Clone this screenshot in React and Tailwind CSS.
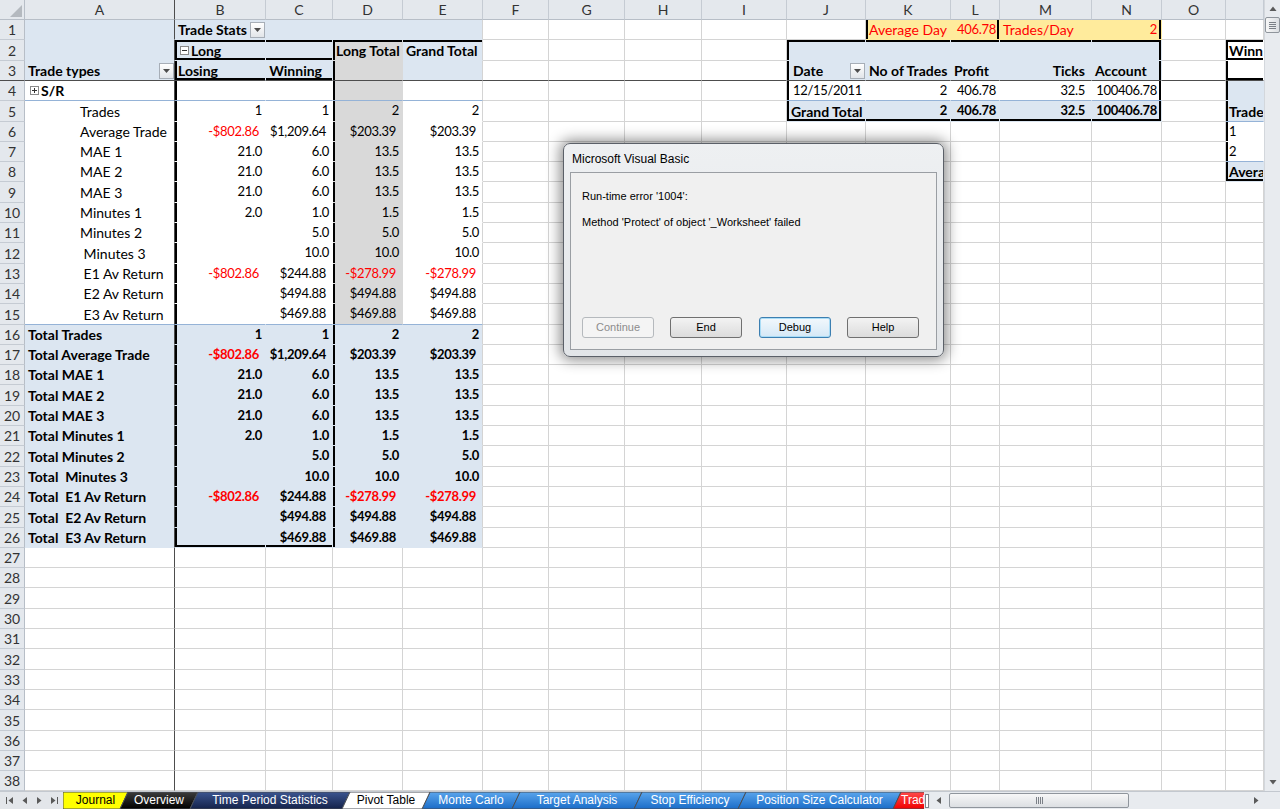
import React from 'react';

// --- GRID GEOMETRY ---
const W = ['w-[25px]', 'w-[150px]', 'w-[91px]', 'w-[67px]', 'w-[70px]', 'w-[80px]', 'w-[66px]', 'w-[76px]', 'w-[77px]', 'w-[85px]', 'w-[79px]', 'w-[85px]', 'w-[49px]', 'w-[92px]', 'w-[70px]', 'w-[64px]', 'w-[38px]'];
const LETTERS = ['', 'A', 'B', 'C', 'D', 'E', 'F', 'G', 'H', 'I', 'J', 'K', 'L', 'M', 'N', 'O', ''];
const COLS = Array.from({ length: 16 }, (_, i) => i + 1);
const ROWS = Array.from({ length: 38 }, (_, i) => i + 1);
const rowTop = (n) => Math.round(20 + (n - 1) * 20.3);
const rowH = (n) => (rowTop(n + 1) - rowTop(n) === 21 ? 'h-[21px]' : 'h-[20px]');

// thick range borders, drawn inside the cell
const TH = {
    l: 'shadow-[inset_2px_0_0_#000]',
    r: 'shadow-[inset_-2px_0_0_#000]',
    t: 'shadow-[inset_0_2px_0_#000]',
    b: 'shadow-[inset_0_-2px_0_#000]',
    lt: 'shadow-[inset_2px_0_0_#000,inset_0_2px_0_#000]',
    lb: 'shadow-[inset_2px_0_0_#000,inset_0_-2px_0_#000]',
    rt: 'shadow-[inset_-2px_0_0_#000,inset_0_2px_0_#000]',
    rb: 'shadow-[inset_-2px_0_0_#000,inset_0_-2px_0_#000]',
    tb: 'shadow-[inset_0_2px_0_#000,inset_0_-2px_0_#000]',
    ltb: 'shadow-[inset_2px_0_0_#000,inset_0_2px_0_#000,inset_0_-2px_0_#000]',
};

const BLUE = 'bg-[#dce6f1]';
const GRAY = 'bg-[#d9d9d9]';
const WHITE = 'bg-white';
const YEL = 'bg-[#ffeb9c]';
const LINE = 'border-b-[#95b3d7]';

// --- CELL DATA ---
const cells = {};
const put = (r, c, o) => { const k = r + '-' + c; cells[k] = { ...cells[k], ...o }; };

// pivot table A1:E26
for (let r = 1; r <= 26; r++) for (let c = 1; c <= 5; c++) {
    let bg = r <= 3 || r >= 16 ? BLUE : WHITE;
    if (c === 4 && r >= 2 && r <= 15) bg = GRAY;
    put(r, c, { bg, g: false, bb: r === 4 || r === 15 ? LINE : undefined, br: c === 5 ? 'border-r-[#d4d4d4]' : undefined });
}
put(2, 2, { th: 'ltb' }); put(2, 3, { th: 'tb' }); put(2, 4, { th: 'lt' }); put(2, 5, { th: 't' });
put(3, 2, { th: 'lb' }); put(3, 3, { th: 'b' });
for (let r = 3; r <= 26; r++) put(r, 4, { th: 'l' });
for (let r = 4; r <= 25; r++) put(r, 2, { th: 'l' });
put(26, 2, { th: 'lb' }); put(26, 3, { th: 'b' });

put(1, 2, { t: 'Trade Stats', b: true, dd: true, p: 'pl-[3px]' });
put(2, 2, { t: 'Long', b: true, icon: 'minus', p: 'pl-[5px]' });
put(2, 4, { t: 'Long Total', b: true, p: 'pl-[3px]' });
put(2, 5, { t: 'Grand Total', b: true, p: 'pl-[3px]' });
put(3, 1, { t: 'Trade types', b: true, dd: true, p: 'pl-[3px]' });
put(3, 2, { t: 'Losing', b: true, p: 'pl-[3px]' });
put(3, 3, { t: 'Winning', b: true, a: 'r', p: 'pr-[10px]' });
put(4, 1, { t: 'S/R', b: true, icon: 'plus', p: 'pl-[5px]' });

const STATS = [
    ['Trades', 'Total Trades', ['1', '1', '2', '2']],
    ['Average Trade', 'Total Average Trade', ['-$802.86', '$1,209.64', '$203.39', '$203.39']],
    ['MAE 1', 'Total MAE 1', ['21.0', '6.0', '13.5', '13.5']],
    ['MAE 2', 'Total MAE 2', ['21.0', '6.0', '13.5', '13.5']],
    ['MAE 3', 'Total MAE 3', ['21.0', '6.0', '13.5', '13.5']],
    ['Minutes 1', 'Total Minutes 1', ['2.0', '1.0', '1.5', '1.5']],
    ['Minutes 2', 'Total Minutes 2', ['', '5.0', '5.0', '5.0']],
    [' Minutes 3', 'Total  Minutes 3', ['', '10.0', '10.0', '10.0']],
    [' E1 Av Return', 'Total  E1 Av Return', ['-$802.86', '$244.88', '-$278.99', '-$278.99']],
    [' E2 Av Return', 'Total  E2 Av Return', ['', '$494.88', '$494.88', '$494.88']],
    [' E3 Av Return', 'Total  E3 Av Return', ['', '$469.88', '$469.88', '$469.88']],
];
STATS.forEach(([label, total, vals], i) => {
    put(5 + i, 1, { t: label, p: 'pl-[55px]' });
    put(16 + i, 1, { t: total, b: true, p: 'pl-[3px]' });
    vals.forEach((v, j) => {
        const o = { t: v, a: 'r', red: v.startsWith('-'), p: v.includes('$') ? 'pr-[6px]' : 'pr-[3px]' };
        put(5 + i, 2 + j, o);
        put(16 + i, 2 + j, { ...o, b: true });
    });
});

// daily summary K1:N5
put(1, 11, { t: 'Average Day', bg: YEL, g: false, red: true, p: 'pl-[3px]', th: 'l' });
put(1, 12, { t: '406.78', bg: YEL, g: false, red: true, a: 'r', p: 'pr-[3px]', th: 'r' });
put(1, 13, { t: 'Trades/Day', bg: YEL, g: false, red: true, p: 'pl-[3px]' });
put(1, 14, { t: '2', bg: YEL, g: false, red: true, a: 'r', p: 'pr-[4px]', th: 'r' });
for (let r = 2; r <= 5; r++) for (let c = 10; c <= 14; c++) {
    put(r, c, { bg: r === 4 ? WHITE : BLUE, g: false, bb: r === 4 ? LINE : undefined });
}
put(2, 10, { th: 'lt' }); put(3, 10, { th: 'l' }); put(4, 10, { th: 'l' }); put(5, 10, { th: 'lb' });
put(2, 14, { th: 'rt' }); put(3, 14, { th: 'r' }); put(4, 14, { th: 'r' }); put(5, 14, { th: 'rb' });
for (let c = 11; c <= 13; c++) { put(2, c, { th: 't' }); put(5, c, { th: 'b' }); }

put(3, 10, { t: 'Date', b: true, dd: true, p: 'pl-[6px]' });
put(3, 11, { t: 'No of Trades', b: true, p: 'pl-[3px]' });
put(3, 12, { t: 'Profit', b: true, p: 'pl-[3px]' });
put(3, 13, { t: 'Ticks', b: true, a: 'r', p: 'pr-[6px]' });
put(3, 14, { t: 'Account', b: true, p: 'pl-[3px]' });
[['12/15/2011', '2', '406.78', '32.5', '100406.78'], ['Grand Total', '2', '406.78', '32.5', '100406.78']].forEach((row, i) => {
    const r = 4 + i;
    put(r, 10, i ? { t: row[0], b: true, p: 'pl-[4px]' } : { t: row[0], a: 'r', p: 'pr-[3px]' });
    put(r, 11, { t: row[1], b: !!i, a: 'r', p: 'pr-[3px]' });
    put(r, 12, { t: row[2], b: !!i, a: 'r', p: 'pr-[3px]' });
    put(r, 13, { t: row[3], b: !!i, a: 'r', p: 'pr-[6px]' });
    put(r, 14, { t: row[4], b: !!i, a: 'r', p: 'pr-[4px]' });
});

// partly visible table in column P
[[2, WHITE, 'ltb', 'Winning', true], [3, WHITE, 'lb', '', false], [4, BLUE, 'l', '', false], [5, BLUE, 'l', 'Trade #', true],
 [6, WHITE, 'l', '1', false], [7, WHITE, 'l', '2', false], [8, BLUE, 'lb', 'Average', true]].forEach(([r, bg, th, t, b]) => {
    put(r, 16, { bg, th, t, b, g: false, p: 'pl-[3px]', bb: r === 5 || r === 7 ? LINE : undefined });
});

// --- SMALL PIECES ---
const Dropdown = () => (
    <span className="shrink-0 w-[15px] h-[16px] border border-[#a7aeb7] bg-linear-to-b from-white to-[#e2e5e9] flex items-center justify-center">
        <svg width="7" height="4" viewBox="0 0 7 4"><path d="M0 0h7L3.5 4z" fill="#4d4d4d" /></svg>
    </span>
);

const Toggle = ({ type }) => (
    <span className="shrink-0 w-[9px] h-[9px] border border-[#8a8a8a] bg-white mr-[2px] relative flex items-center justify-center">
        <span className="w-[5px] h-px bg-[#333]" />
        {type === 'plus' && <span className="absolute w-px h-[5px] bg-[#333]" />}
    </span>
);

// Calibri digits are narrow; Lato's are not, so numbers get a slightly smaller size
const isNum = (t) => /^[-$\d]/.test(t || '');

function Cell({ r, c }) {
    const d = cells[r + '-' + c] || {};
    const grid = d.g !== false;
    const br = d.br || (c === 1 ? 'border-r-[#4d4d4d]' : grid ? 'border-r-[#d4d4d4]' : 'border-r-transparent');
    const bb = d.bb || (r === 3 ? 'border-b-[#4d4d4d]' : grid ? 'border-b-[#d4d4d4]' : 'border-b-transparent');
    const justify = d.a === 'r' ? 'justify-end' : d.dd ? 'justify-between' : 'justify-start';
    return (
        <div className={['shrink-0 flex items-center overflow-hidden whitespace-pre border-r border-b', W[c], d.bg || '', br, bb, d.th ? TH[d.th] : '', justify, d.p || '', d.b ? 'font-bold' : '', d.red ? 'text-[#ff0000]' : '', isNum(d.t) ? 'text-[13px] tracking-[-0.3px]' : ''].join(' ')}>
            {d.icon && <Toggle type={d.icon} />}
            {d.t && <span className={d.dd ? 'flex-1' : ''}>{d.t}</span>}
            {d.dd && <Dropdown />}
        </div>
    );
}

const HeaderRow = () => (
    <div className="flex h-[20px] shrink-0">
        <div className="shrink-0 w-[25px] bg-[#e4e8ed] border-r border-b border-[#b7bec7] flex items-end justify-end p-[2px]">
            <svg width="12" height="12" viewBox="0 0 12 12"><path d="M12 0v12H0z" fill="#b4b9bf" /></svg>
        </div>
        {COLS.map(c => (
            <div key={c} className={['shrink-0 bg-[#e4e8ed] border-r border-b border-b-[#b7bec7] flex items-center justify-center text-[#333] overflow-hidden', W[c], c === 1 ? 'border-r-[#4d4d4d]' : 'border-r-[#c5cbd3]'].join(' ')}>{LETTERS[c]}</div>
        ))}
    </div>
);

const SheetRow = ({ r }) => (
    <div className={'flex shrink-0 ' + rowH(r)}>
        <div className={['shrink-0 w-[25px] bg-[#e4e8ed] border-r border-r-[#b7bec7] border-b flex items-center justify-center text-[#333]', r === 3 ? 'border-b-[#4d4d4d]' : 'border-b-[#c5cbd3]'].join(' ')}>{r}</div>
        {COLS.map(c => <Cell key={c} r={r} c={c} />)}
    </div>
);

const Arrow = ({ dir }) => (
    <svg width="8" height="9" viewBox="0 0 8 9" className="shrink-0">
        {dir === 'up' && <path d="M0.5 7h7L4 2.5z" fill="#5a5a5a" />}
        {dir === 'down' && <path d="M0.5 2h7L4 6.5z" fill="#5a5a5a" />}
        {dir === 'left' && <path d="M6 1v7L1.5 4.5z" fill="#5a5a5a" />}
        {dir === 'right' && <path d="M2 1v7l4.5-3.5z" fill="#5a5a5a" />}
    </svg>
);

const VScroll = () => (
    <div className="w-[16px] shrink-0 bg-[#e8ebef] border-l border-[#d3d7dc] flex flex-col items-center">
        <div className="h-[17px] flex items-center justify-center"><Arrow dir="up" /></div>
        <div className="w-[15px] h-[16px] rounded-[2px] border border-[#8f959c] bg-linear-to-r from-[#f7f7f7] to-[#dcdfe3] flex flex-col items-center justify-center gap-px">
            <span className="w-[7px] h-px bg-[#7b8087]" />
            <span className="w-[7px] h-px bg-[#7b8087]" />
            <span className="w-[7px] h-px bg-[#7b8087]" />
            <span className="w-[7px] h-px bg-[#7b8087]" />
        </div>
        <div className="flex-1" />
        <div className="h-[17px] flex items-center justify-center"><Arrow dir="down" /></div>
    </div>
);

// --- SHEET TABS ---
const TABS = [
    { n: 'Journal', w: 'w-[65px]', px: 65, c1: '#ffff00', c2: '#ffff00', tc: 'text-black', first: true },
    { n: 'Overview', w: 'w-[78px]', px: 78, c1: '#3c3c3c', c2: '#000000', tc: 'text-white' },
    { n: 'Time Period Statistics', w: 'w-[160px]', px: 160, c1: '#3b5590', c2: '#14224a', tc: 'text-white' },
    { n: 'Pivot Table', w: 'w-[88px]', px: 88, c1: '#ffffff', c2: '#ffffff', tc: 'text-black', active: true },
    { n: 'Monte Carlo', w: 'w-[98px]', px: 98, c1: '#5aa5ec', c2: '#1a6cc8', tc: 'text-white' },
    { n: 'Target Analysis', w: 'w-[130px]', px: 130, c1: '#5aa5ec', c2: '#1a6cc8', tc: 'text-white' },
    { n: 'Stop Efficiency', w: 'w-[112px]', px: 112, c1: '#5aa5ec', c2: '#1a6cc8', tc: 'text-white' },
    { n: 'Position Size Calculator', w: 'w-[163px]', px: 163, c1: '#5aa5ec', c2: '#1a6cc8', tc: 'text-white' },
    { n: 'Trades', w: 'w-[70px]', px: 70, c1: '#ff4a4a', c2: '#f00000', tc: 'text-white', last: true },
];

const SheetTab = ({ tab, i }) => {
    const h = 17;
    const pts = tab.first ? `0,${h} 0,0 ${tab.px},0 ${tab.px - 8},${h}` : `0,${h} 8,0 ${tab.px},0 ${tab.px - 8},${h}`;
    return (
        <div className={['relative shrink-0 h-[17px] -mr-[8px] flex items-center', tab.w, tab.active ? 'z-10' : '', tab.last ? 'justify-start pl-[8px]' : 'justify-center px-[8px]'].join(' ')}>
            <svg className="absolute inset-0 w-full h-full" viewBox={`0 0 ${tab.px} ${h}`} preserveAspectRatio="none">
                <defs>
                    <linearGradient id={'tabg' + i} x1="0" y1="0" x2="0" y2="1">
                        <stop offset="0" stopColor={tab.c1} />
                        <stop offset="1" stopColor={tab.c2} />
                    </linearGradient>
                </defs>
                <polygon points={pts} fill={`url(#tabg${i})`} stroke="#4a4f57" strokeWidth="1" />
            </svg>
            <span className={'relative whitespace-nowrap leading-[17px] ' + tab.tc}>{tab.n}</span>
        </div>
    );
};

const TabBar = () => (
    <div className="h-[18px] shrink-0 flex bg-[#e3e6ea] border-t border-[#c3c8cf] [font-family:'Liberation_Sans',Arial,sans-serif] text-[12px]">
        <div className="w-[63px] shrink-0 flex items-center pl-[3px]">
            <span className="w-[15px] flex items-center justify-center"><span className="w-px h-[7px] bg-[#5a5a5a]" /><Arrow dir="left" /></span>
            <span className="w-[14px] flex items-center justify-center"><Arrow dir="left" /></span>
            <span className="w-[14px] flex items-center justify-center"><Arrow dir="right" /></span>
            <span className="w-[15px] flex items-center justify-center"><Arrow dir="right" /><span className="w-px h-[7px] bg-[#5a5a5a]" /></span>
        </div>
        <div className="w-[861px] shrink-0 flex overflow-hidden">
            {TABS.map((t, i) => <SheetTab key={t.n} tab={t} i={i} />)}
        </div>
        <div className="w-[6px] shrink-0 flex items-center justify-center">
            <span className="w-[4px] h-[14px] border border-[#7d838b] bg-white" />
        </div>
        <div className="w-[334px] shrink-0 flex items-center bg-[#e8ebef]">
            <span className="w-[17px] flex items-center justify-center"><Arrow dir="left" /></span>
            <div className="ml-[2px] w-[180px] h-[15px] rounded-[2px] border border-[#8f959c] bg-linear-to-b from-[#f7f7f7] to-[#dcdfe3] flex items-center justify-center gap-px">
                <span className="w-px h-[7px] bg-[#7b8087]" />
                <span className="w-px h-[7px] bg-[#7b8087]" />
                <span className="w-px h-[7px] bg-[#7b8087]" />
                <span className="w-px h-[7px] bg-[#7b8087]" />
            </div>
            <div className="flex-1" />
            <span className="w-[17px] flex items-center justify-center"><Arrow dir="right" /></span>
        </div>
        <div className="w-[16px] shrink-0 bg-[#e8ebef]" />
    </div>
);

// --- VBA ERROR DIALOG ---
const DlgButton = ({ label, disabled, focused }) => (
    <div className={['w-[72px] h-[21px] rounded-[3px] border flex items-center justify-center', disabled ? 'border-[#b5b9bd] bg-[#f4f4f4] text-[#8c8c8c]' : focused ? 'border-[#3c7fb1] bg-linear-to-b from-[#f2f8fc] to-[#d5e8f6] shadow-[inset_0_0_0_1px_#a9dcf6]' : 'border-[#707070] bg-linear-to-b from-[#f3f3f3] to-[#dcdcdc]'].join(' ')}>
        {label}
    </div>
);

const ErrorDialog = () => (
    <div className="absolute left-[563px] top-[143px] w-[381px] h-[214px] rounded-[7px] border border-[#5b6068] bg-linear-to-b from-[#eef0f2] to-[#e2e5e8] shadow-[0_0_14px_3px_rgba(0,0,0,0.45)] flex flex-col [font-family:'Liberation_Sans',Arial,sans-serif] text-[12px] text-black">
        <div className="h-[28px] shrink-0 flex items-center pl-[8px] pt-px">Microsoft Visual Basic</div>
        <div className="flex-1 mx-[6px] mb-[6px] border border-[#9a9ea3] bg-[#f0f0f0] flex flex-col pl-[11px] pt-[16px] pb-[11px] text-[11px]">
            <div className="leading-[14px]">Run-time error '1004':</div>
            <div className="leading-[14px] mt-[12px]">Method 'Protect' of object '_Worksheet' failed</div>
            <div className="mt-auto flex">
                <DlgButton label="Continue" disabled />
                <div className="ml-[16px]"><DlgButton label="End" /></div>
                <div className="ml-[17px]"><DlgButton label="Debug" focused /></div>
                <div className="ml-[16px]"><DlgButton label="Help" /></div>
            </div>
        </div>
    </div>
);

export default function App() {
    return (
        <div className="w-[1280px] h-[809px] overflow-hidden relative bg-white flex flex-col [font-family:Lato,sans-serif] text-[14px] text-black">
            <div className="flex flex-1 min-h-0">
                <div className="w-[1264px] shrink-0 flex flex-col overflow-hidden">
                    <HeaderRow />
                    {ROWS.map(r => <SheetRow key={r} r={r} />)}
                </div>
                <VScroll />
            </div>
            <TabBar />
            <ErrorDialog />
        </div>
    );
}
